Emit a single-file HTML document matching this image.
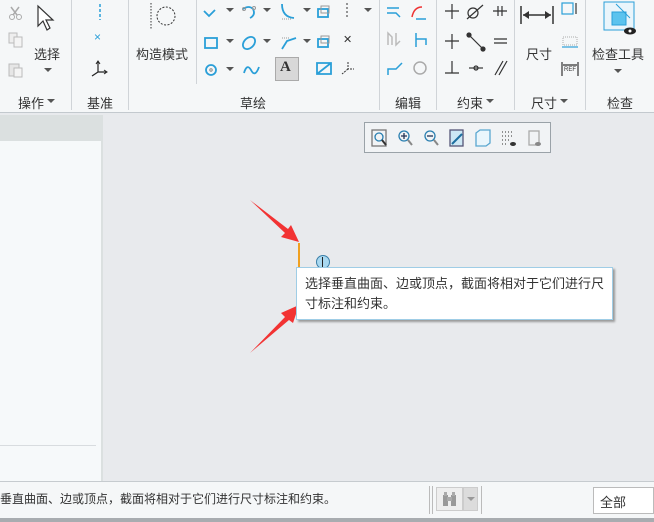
<!DOCTYPE html>
<html><head><meta charset="utf-8"><style>
*{margin:0;padding:0;box-sizing:border-box}
body{width:654px;height:522px;overflow:hidden;position:relative;background:#e8eaed;font-family:"Liberation Sans","Noto Sans CJK SC",sans-serif;color:#333}
.a{position:absolute}
.t{position:absolute;font-size:13px;white-space:nowrap;color:#333}
.sep{position:absolute;width:1px;background:#d0d4d8}
.dd{position:absolute;width:0;height:0;border-left:4px solid transparent;border-right:4px solid transparent;border-top:4px solid #555}
svg{position:absolute;overflow:visible}
</style></head><body>
<div class="a" style="left:0;top:0;width:654px;height:113px;background:#f5f7f8;border-bottom:1px solid #c3c9ce"></div>
<div class="sep" style="left:71px;top:0;height:110px"></div>
<div class="sep" style="left:128px;top:0;height:110px"></div>
<div class="sep" style="left:196px;top:0;height:84px"></div>
<div class="sep" style="left:379px;top:0;height:110px"></div>
<div class="sep" style="left:436px;top:0;height:110px"></div>
<div class="sep" style="left:514px;top:0;height:110px"></div>
<div class="sep" style="left:585px;top:0;height:110px"></div>

<svg style="left:8px;top:5px" width="16" height="16"><path d="M3 2 L9 10 M11 2 L5 10" stroke="#aaa" stroke-width="1.5"/><circle cx="4" cy="12" r="2.5" fill="none" stroke="#aaa"/><circle cx="11" cy="12" r="2.5" fill="none" stroke="#aaa"/></svg>
<svg style="left:8px;top:32px" width="16" height="16"><rect x="1" y="1" width="8" height="10" fill="#eee" stroke="#bbb"/><rect x="6" y="5" width="8" height="10" fill="#f4f4f4" stroke="#bbb"/></svg>
<svg style="left:8px;top:61px" width="16" height="16"><rect x="1" y="3" width="10" height="12" fill="#e6e6e6" stroke="#bbb"/><rect x="6" y="7" width="8" height="9" fill="#f4f4f4" stroke="#bbb"/></svg>
<svg style="left:36px;top:4px" width="20" height="30"><path d="M2 2 L2 22 L7 17 L11 26 L14 24 L10 16 L17 16 Z" fill="#fff" stroke="#333" stroke-width="1.2"/></svg>
<div class="t" style="left:34px;top:44px">选择</div>
<div class="dd" style="left:44px;top:68px"></div>
<div class="t" style="left:18px;top:93px">操作</div>
<div class="dd" style="left:47px;top:99px"></div>
<svg style="left:96px;top:2px" width="10" height="20"><path d="M4 2 V18" stroke="#2a9fd8" stroke-width="1.5" stroke-dasharray="3 2"/></svg>
<div class="t" style="left:94px;top:30px;color:#2a9fd8;font-size:12px">×</div>
<svg style="left:90px;top:60px" width="18" height="18"><path d="M8 2 V12 L16 12 M8 12 L2 16" stroke="#222" fill="none" stroke-width="1.2"/><path d="M6 4 L8 1 L10 4 M14 10 L17 12 L14 14" stroke="#222" fill="none"/></svg>
<div class="t" style="left:87px;top:93px">基准</div>
<svg style="left:148px;top:2px" width="30" height="28"><path d="M3 1 V27" stroke="#333" stroke-dasharray="1.5 1.5"/><circle cx="18" cy="14" r="9" fill="none" stroke="#333" stroke-dasharray="2 1.5"/></svg>
<div class="t" style="left:136px;top:44px">构造模式</div>
<div class="t" style="left:240px;top:93px">草绘</div>
<svg style="left:203px;top:3px" width="180" height="80" fill="none" stroke="#2a9fd8" stroke-width="1.8">
<path d="M1 8 L6 13 L12 7"/>
<path d="M40 6 Q46 2 50 6 Q53 12 47 15"/><circle cx="41" cy="6" r="1.5" stroke="#999" stroke-width="1"/><circle cx="51" cy="5" r="1.5" stroke="#999" stroke-width="1"/>
<path d="M79 1 Q79 14 91 15"/><path d="M79 16 H89" stroke="#999" stroke-width="1" stroke-dasharray="1 1"/>
<rect x="115" y="6" width="10" height="8"/><rect x="118" y="3" width="8" height="7" stroke="#999" stroke-width="1"/>
<rect x="2" y="35" width="12" height="10"/>
<ellipse cx="46" cy="40" rx="7" ry="5" transform="rotate(-45 46 40)"/>
<path d="M79 46 L84 38 L93 35"/><path d="M79 35 H86" stroke="#999" stroke-width="1" stroke-dasharray="1 1"/>
<rect x="115" y="36" width="10" height="8"/><rect x="118" y="33" width="8" height="7" stroke="#999" stroke-width="1"/>
<circle cx="8" cy="67" r="5"/><circle cx="8" cy="67" r="1.2" stroke="#888" stroke-width="1"/>
<path d="M41 70 Q44 60 48 67 Q52 75 56 64"/>
<path d="M114 60 H128 V71 H114 Z M114 71 L128 60"/>
</svg>
<div class="dd" style="left:226px;top:8px"></div><div class="dd" style="left:263px;top:8px"></div><div class="dd" style="left:303px;top:8px"></div><div class="dd" style="left:364px;top:8px"></div>
<div class="dd" style="left:226px;top:39px"></div><div class="dd" style="left:263px;top:39px"></div><div class="dd" style="left:303px;top:39px"></div>
<div class="dd" style="left:226px;top:67px"></div>
<svg style="left:346px;top:3px" width="4" height="16"><path d="M1 0 V16" stroke="#333" stroke-dasharray="2 2"/></svg>
<div class="t" style="left:343px;top:33px;font-size:11px">✕</div>
<svg style="left:340px;top:60px" width="16" height="16"><path d="M8 2 V9 H14 M8 9 L2 14" stroke="#333" fill="none" stroke-dasharray="2 1"/></svg>
<div class="a" style="left:275px;top:57px;width:24px;height:24px;background:#d8d8d8;border:1px solid #aaa"></div>
<div class="t" style="left:280px;top:59px;font-family:'Liberation Serif',serif;font-weight:bold;font-size:15px">A</div>
<svg style="left:386px;top:3px" width="50" height="76" fill="none" stroke-width="1.5">
<path d="M1 5 H13 M1 10 H10 L14 14" stroke="#2a9fd8"/><path d="M26 14 Q28 4 36 4" stroke="#e33"/><path d="M30 16 H40" stroke="#2a9fd8"/>
<path d="M2 42 V30 L6 34 V42 M10 30 V42 L14 38" stroke="#bbb"/><path d="M30 36 H40 V42 M30 30 V44" stroke="#2a9fd8"/>
<path d="M2 72 V66 H10 L16 60" stroke="#2a9fd8"/><circle cx="34" cy="65" r="6" stroke="#aaa"/>
</svg>
<div class="t" style="left:395px;top:93px">编辑</div>
<svg style="left:443px;top:3px" width="68" height="76" fill="none" stroke="#333" stroke-width="1.2">
<path d="M2 8 H16 M9 1 V16"/><circle cx="30" cy="10" r="5"/><path d="M24 16 L40 2"/><path d="M50 8 H64 M55 3 V13 M59 3 V13"/>
<path d="M2 38 H16 M9 31 V46"/><path d="M26 32 L40 46"/><circle cx="26" cy="32" r="2" fill="#333"/><circle cx="40" cy="46" r="2" fill="#333"/><path d="M51 36 H64 M51 40 H64"/>
<path d="M2 70 H16 M9 58 V70"/><path d="M26 65 H40"/><circle cx="33" cy="65" r="2"/><path d="M52 72 L60 58 M56 72 L64 58"/>
</svg>
<div class="t" style="left:457px;top:93px">约束</div><div class="dd" style="left:486px;top:99px"></div>
<svg style="left:520px;top:6px" width="40" height="20"><path d="M1 0 V18 M33 0 V18 M3 9 H31" stroke="#333" stroke-width="1.5"/><path d="M3 9 L9 5 V13 Z M31 9 L25 5 V13 Z" fill="#333"/></svg>
<div class="t" style="left:526px;top:44px">尺寸</div>
<svg style="left:561px;top:2px" width="20" height="76" fill="none" stroke-width="1.2"><rect x="1" y="1" width="11" height="11" stroke="#2a9fd8"/><path d="M15 1 V12" stroke="#333"/><rect x="2" y="35" width="14" height="8" stroke="#bbb" stroke-dasharray="1 1"/><path d="M1 45 H17" stroke="#2a9fd8"/><path d="M1 60 V74 M17 60 V74 M2 63 H16" stroke="#333"/></svg>
<div class="t" style="left:564px;top:67px;font-size:6px">REF</div>
<div class="t" style="left:531px;top:93px">尺寸</div><div class="dd" style="left:560px;top:99px"></div>
<svg style="left:604px;top:2px" width="34" height="34"><rect x="0" y="0" width="30" height="28" fill="#eaf5fb" stroke="#2a9fd8"/><rect x="8" y="10" width="14" height="13" fill="#5cc3ee" stroke="#2a9fd8"/><path d="M12 2 L26 16" stroke="#2a9fd8"/><ellipse cx="26" cy="29" rx="6" ry="3.5" fill="#222"/><circle cx="26" cy="29" r="1.5" fill="#fff"/></svg>
<div class="t" style="left:592px;top:44px">检查工具</div>
<div class="dd" style="left:614px;top:69px"></div>
<div class="t" style="left:607px;top:93px">检查</div>

<div class="a" style="left:0;top:115px;width:103px;height:366px;background:#dbe0e0"></div>
<div class="a" style="left:0;top:141px;width:101px;height:340px;background:#f6f9fa"></div>
<div class="a" style="left:0;top:445px;width:96px;height:1px;background:#d8dcdf"></div>

<div class="a" style="left:364px;top:122px;width:187px;height:31px;background:#f1f3f5;border:1px solid #9aa2a8"></div>
<svg style="left:370px;top:128px" width="178" height="22" fill="none" stroke-width="1.3">
<rect x="2" y="2" width="14" height="16" stroke="#777"/><circle cx="9" cy="9" r="4" stroke="#2a7fb0"/><path d="M12 12 L16 17" stroke="#333" stroke-width="2"/>
<circle cx="34" cy="8" r="5" stroke="#2a7fb0"/><path d="M31 8 H37 M34 5 V11" stroke="#235"/><path d="M38 12 L42 17" stroke="#888" stroke-width="2"/>
<circle cx="60" cy="8" r="5" stroke="#2a7fb0"/><path d="M57 8 H63" stroke="#235"/><path d="M64 12 L68 17" stroke="#888" stroke-width="2"/>
<rect x="80" y="2" width="13" height="16" fill="#cde8f5" stroke="#557"/><path d="M82 16 L92 6" stroke="#1d6fa0" stroke-width="2"/>
<path d="M106 5 L110 2 H120 V15 L116 18 H106 Z" fill="#eaf6fc" stroke="#5aa7d0"/>
<path d="M132 4 h12 M132 8 h12 M132 12 h8 M132 16 h6" stroke="#555" stroke-dasharray="1 2"/><ellipse cx="143" cy="16" rx="3" ry="2" fill="#333"/>
<rect x="159" y="3" width="10" height="14" stroke="#aaa"/><ellipse cx="168" cy="16" rx="3" ry="2" fill="#888"/>
</svg>

<svg style="left:245px;top:195px" width="60" height="160"><path d="M5 5 L40 38 L36 42 L54 47 L46 30 L43 34 Z" fill="#f23333"/><path d="M5 158 L40 122 L36 118 L54 110 L48 128 L44 125 Z" fill="#f23333"/></svg>
<div class="a" style="left:298px;top:243px;width:2px;height:26px;background:#f0a020"></div>
<div class="a" style="left:316px;top:255px;width:14px;height:14px;border-radius:50%;background:#a8d8f0;border:1px solid #3a7fa8"></div>
<div class="a" style="left:322px;top:257px;width:1px;height:10px;background:#222"></div>
<div class="a" style="left:296px;top:267px;width:317px;height:53px;background:#fff;border:1px solid #9fcde6;box-shadow:2px 2px 2px #999"></div>
<div class="t" style="left:305px;top:274px;line-height:20px">选择垂直曲面、边或顶点，截面将相对于它们进行尺<br>寸标注和约束。</div>

<div class="a" style="left:0;top:481px;width:654px;height:37px;background:#f5f7f8;border-top:1px solid #c6cbcf"></div>
<div class="t" style="left:0;top:490px;font-size:12px">垂直曲面、边或顶点，截面将相对于它们进行尺寸标注和约束。</div>
<div class="a" style="left:429px;top:486px;width:1px;height:28px;background:#bbb"></div>
<div class="a" style="left:432px;top:486px;width:1px;height:28px;background:#bbb"></div>
<div class="a" style="left:436px;top:487px;width:27px;height:24px;background:#eee;border:1px solid #ccc"></div>
<div class="a" style="left:463px;top:487px;width:15px;height:24px;background:#dcdcdc;border:1px solid #ccc"></div>
<div class="dd" style="left:467px;top:497px;border-top-color:#999"></div>
<svg style="left:442px;top:491px" width="16" height="16"><rect x="1" y="4" width="5" height="11" fill="#999"/><rect x="9" y="4" width="5" height="11" fill="#999"/><rect x="5" y="6" width="5" height="4" fill="#aaa"/><rect x="2" y="1" width="3" height="4" fill="#aaa"/><rect x="10" y="1" width="3" height="4" fill="#aaa"/></svg>
<div class="a" style="left:481px;top:486px;width:1px;height:28px;background:#bbb"></div>
<div class="a" style="left:593px;top:487px;width:61px;height:27px;background:#fff;border:1px solid #bbb"></div>
<div class="t" style="left:600px;top:492px;font-size:13px">全部</div>
<div class="a" style="left:0;top:518px;width:654px;height:4px;background:#a8acb0"></div>
</body></html>
